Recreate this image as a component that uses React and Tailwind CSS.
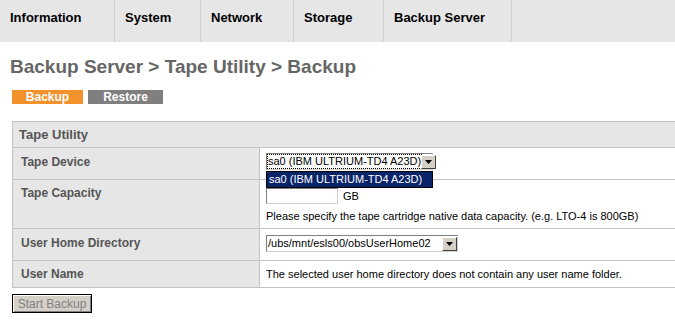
import { useState } from 'react';

const tabs = [
  { label: 'Information', w: 'w-[115px]' },
  { label: 'System', w: 'w-[86px]' },
  { label: 'Network', w: 'w-[93px]' },
  { label: 'Storage', w: 'w-[90px]' },
  { label: 'Backup Server', w: 'w-[128px]' },
];

function Arrow() {
  return (
    <span className="flex h-[14px] w-[15px] shrink-0 items-center justify-center border border-t-white border-l-white border-r-[#404040] border-b-[#404040] bg-[#d4d0c8]">
      <svg width="7" height="4" viewBox="0 0 7 4">
        <path d="M0 0h7L3.5 4z" fill="#000" />
      </svg>
    </span>
  );
}

function FakeSelect({ value, width, dotted }) {
  return (
    <div className={`flex h-[17px] items-center justify-between border border-t-[#808080] border-l-[#808080] border-r-[#d4d0c8] border-b-[#d4d0c8] bg-white pl-px ${width}`}>
      <span className={`whitespace-nowrap text-[11px] leading-[13px] text-black ${dotted ? 'outline outline-1 outline-dotted outline-black' : ''}`}>{value}</span>
      <Arrow />
    </div>
  );
}

export default function App() {
  const [tab] = useState('Backup');
  const font = { fontFamily: '"Liberation Sans", Arial, sans-serif' };

  return (
    <div className="h-[320px] w-[675px] overflow-hidden bg-white" style={font}>
      <div className="flex h-[42px] bg-[#e6e6e6]">
        {tabs.map((t) => (
          <div key={t.label} className={`${t.w} border-r border-[#d0d0d0] pl-[10px] pt-[8px] text-[13px] font-bold text-black`}>
            {t.label}
          </div>
        ))}
      </div>

      <div className="px-[12px]">
        <h1 className="-ml-[2px] pt-[13px] text-[19px] font-bold leading-[23px] text-[#666666]">
          Backup Server &gt; Tape Utility &gt; Backup
        </h1>

        <div className="mt-[12px] flex gap-[5px]">
          <div className={`flex h-[14px] w-[71px] items-center justify-center text-[12px] font-bold text-white ${tab === 'Backup' ? 'bg-[#f3922c]' : 'bg-[#7f7f7f]'}`}>Backup</div>
          <div className="flex h-[14px] w-[75px] items-center justify-center bg-[#7f7f7f] text-[12px] font-bold text-white">Restore</div>
        </div>

        <table className="mt-[17px] w-[670px] table-fixed border-collapse text-[12px]">
          <colgroup>
            <col className="w-[247px]" />
            <col />
          </colgroup>
          <tbody>
            <tr className="h-[26px]">
              <td colSpan={2} className="border border-[#c3c3c3] bg-[#e6e6e6] pl-[6px] text-[13px] font-bold text-[#555555]">Tape Utility</td>
            </tr>
            <tr className="h-[32px] align-top">
              <td className="border border-[#c3c3c3] bg-[#e6e6e6] pl-[8px] pt-[5px] font-bold text-[#555555]">Tape Device</td>
              <td className="relative border border-[#c3c3c3] pl-[6px] pt-[5px]">
                <FakeSelect value="sa0 (IBM ULTRIUM-TD4 A23D)" width="w-[167px]" dotted />
                <div className="absolute left-[6px] top-[23px] z-10 flex h-[17px] w-[167px] items-center whitespace-nowrap border border-black bg-[#0a246a] pl-[2px] text-[11px] text-white">
                  sa0 (IBM ULTRIUM-TD4 A23D)
                </div>
              </td>
            </tr>
            <tr className="h-[49px] align-top">
              <td className="border border-[#c3c3c3] bg-[#e6e6e6] pl-[8px] pt-[4px] font-bold text-[#555555]">Tape Capacity</td>
              <td className="border border-[#c3c3c3] pl-[6px] pt-[8px]">
                <div className="flex items-center gap-[5px]">
                  <div className="h-[16px] w-[72px] border border-t-[#808080] border-l-[#808080] border-r-[#d4d0c8] border-b-[#d4d0c8] bg-white" />
                  <span className="text-[11px] leading-[14px] text-black">GB</span>
                </div>
                <div className="mt-[5px] whitespace-nowrap text-[11px] leading-[14px] text-black">Please specify the tape cartridge native data capacity. (e.g. LTO-4 is 800GB)</div>
              </td>
            </tr>
            <tr className="h-[32px] align-top">
              <td className="border border-[#c3c3c3] bg-[#e6e6e6] pl-[8px] pt-[5px] font-bold text-[#555555]">User Home Directory</td>
              <td className="border border-[#c3c3c3] pl-[6px] pt-[6px]">
                <FakeSelect value="/ubs/mnt/esls00/obsUserHome02" width="w-[192px]" />
              </td>
            </tr>
            <tr className="h-[27px]">
              <td className="border border-[#c3c3c3] bg-[#e6e6e6] pl-[8px] font-bold text-[#555555]">User Name</td>
              <td className="whitespace-nowrap border border-[#c3c3c3] pl-[6px] text-[11px] text-black">The selected user home directory does not contain any user name folder.</td>
            </tr>
          </tbody>
        </table>

        <button className="mt-[6px] h-[19px] w-[80px] border border-black bg-[#d4d0c8] text-[12px] text-[#808080] shadow-[inset_1px_1px_0_#fff,inset_-1px_-1px_0_#808080]">
          Start Backup
        </button>
      </div>
    </div>
  );
}
